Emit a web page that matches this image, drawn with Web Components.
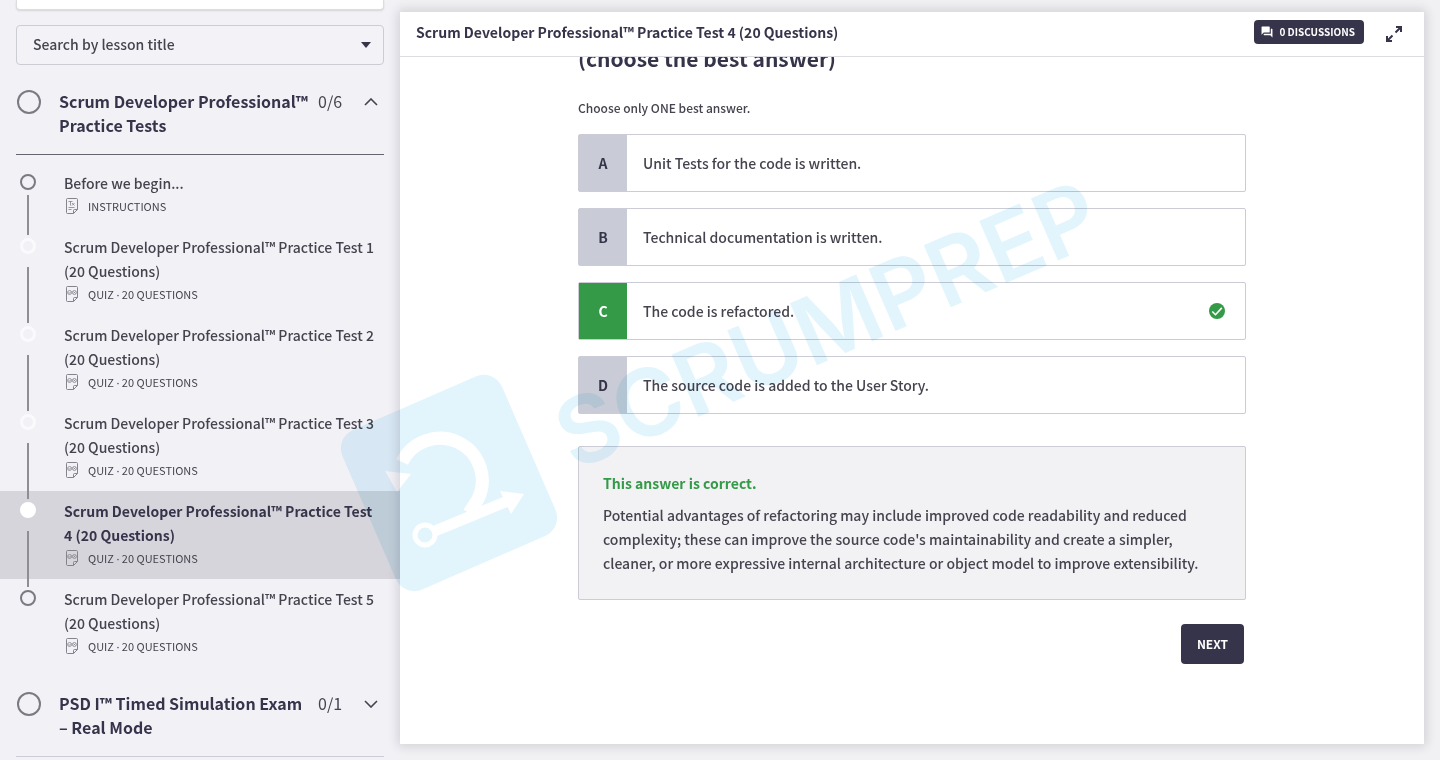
<!DOCTYPE html>
<html lang="en">
<head>
<meta charset="utf-8">
<meta name="viewport" content="width=device-width, initial-scale=1">
<title>Scrum Developer Professional™ Practice Test 4</title>
<style>
	:root {
		--ink: #36344a;
		--text: #45434e;
		--line: #cbccd5;
		--page: #f1f1f3;
		--side: #f2f1f6;
		--green: #349a47;
		--size-xs: 10px;
		--size-s: 11px;
		--size-m: 12px;
		--size-l: 14px;
		--size-xl: 16px;
	}

	body {
		margin: 0;
		background: var(--page);
		color: var(--text);
		font-family: 'Noto Sans CJK SC', 'Noto Sans', sans-serif;
		font-size: var(--size-l);
		font-weight: 500;
		line-height: 24px;
	}
</style>
</head>
<body>

<course-player>
	<course-sidebar slot="sidebar">
		<course-section count="0/6" open>
			<span slot="title">Scrum Developer Professional™ Practice Tests</span>
			<lesson-item kind="text" meta="INSTRUCTIONS">Before we begin...</lesson-item>
			<lesson-item kind="quiz" state="done" meta="QUIZ · 20 QUESTIONS">Scrum Developer Professional™ Practice Test 1 (20 Questions)</lesson-item>
			<lesson-item kind="quiz" state="done" meta="QUIZ · 20 QUESTIONS">Scrum Developer Professional™ Practice Test 2 (20 Questions)</lesson-item>
			<lesson-item kind="quiz" state="done" meta="QUIZ · 20 QUESTIONS">Scrum Developer Professional™ Practice Test 3 (20 Questions)</lesson-item>
			<lesson-item kind="quiz" state="current" meta="QUIZ · 20 QUESTIONS">Scrum Developer Professional™ Practice Test 4 (20 Questions)</lesson-item>
			<lesson-item kind="quiz" last meta="QUIZ · 20 QUESTIONS">Scrum Developer Professional™ Practice Test 5 (20 Questions)</lesson-item>
		</course-section>
		<course-section count="0/1">
			<span slot="title">PSD I™ Timed Simulation Exam – Real Mode</span>
		</course-section>
	</course-sidebar>

	<lesson-panel>
		<span slot="title">Scrum Developer Professional™ Practice Test 4 (20 Questions)</span>
		<quiz-question>
			<span slot="question">(choose the best answer)</span>
			<span slot="hint">Choose only ONE best answer.</span>
			<answer-option letter="A">Unit Tests for the code is written.</answer-option>
			<answer-option letter="B">Technical documentation is written.</answer-option>
			<answer-option letter="C" correct>The code is refactored.</answer-option>
			<answer-option letter="D">The source code is added to the User Story.</answer-option>
			<answer-feedback slot="feedback">
				<span slot="verdict">This answer is correct.</span>
				Potential advantages of refactoring may include improved code readability and reduced complexity; these can improve the source code's maintainability and create a simpler, cleaner, or more expressive internal architecture or object model to improve extensibility.
			</answer-feedback>
		</quiz-question>
	</lesson-panel>

	<brand-watermark slot="watermark"></brand-watermark>
</course-player>

<script>
(() => {
	// ======
	// Icons.
	// ======

	const chevron = `
		<svg class="chevron" width="14" height="8" viewBox="0 0 14 8" fill="none" stroke="currentColor" stroke-width="1.6" aria-hidden="true">
			<path d="M1 7l6-6 6 6"/>
		</svg>
	`;

	const iconText = `
		<svg width="14" height="16" viewBox="0 0 14 16" fill="none" stroke="#85838c" aria-hidden="true">
			<path d="M8.500 15.500H2.500a1 1 0 0 1-1-1v-13a1 1 0 0 1 1-1h9a1 1 0 0 1 1 1v10zM8.500 15.500v-3a1 1 0 0 1 1-1h3"/>
			<path d="M3.500 3.500h4M5.500 3.500v4M7 5l2.500 2.500M9.500 5L7 7.500M3.500 9.500h6M3.500 11.500h3" stroke-width=".8"/>
		</svg>
	`;

	const iconQuiz = `
		<svg width="14" height="16" viewBox="0 0 14 16" fill="none" stroke="#85838c" aria-hidden="true">
			<path d="M8.500 15.500H2.500a1 1 0 0 1-1-1v-13a1 1 0 0 1 1-1h9a1 1 0 0 1 1 1v10zM8.500 15.500v-3a1 1 0 0 1 1-1h3"/>
			<g stroke-width=".8">
				<circle cx="4.600" cy="6.500" r="2"/>
				<circle cx="9.400" cy="6.500" r="2"/>
				<path d="M3.500 6.500l1 .8 1.200-1.500M8.500 5.600l1.800 1.800M10.300 5.600L8.500 7.400"/>
			</g>
		</svg>
	`;

	// =====================
	// Helper: base element.
	// =====================

	class BaseElement extends HTMLElement {
		constructor() {
			super();

			const template = document.createElement('template');
			template.innerHTML = `
				<style>*, *::before { box-sizing: border-box; }</style>
				${this.render()}
			`;

			this.attachShadow({ mode: 'open' });
			this.shadowRoot.appendChild(template.content.cloneNode(true));
		}
	}

	// ============
	// Page layout.
	// ============

	class CoursePlayer extends BaseElement {
		render() {
			return `
				<style>
					:host {
						display: grid;
						grid-template-columns: 400px minmax(0, 1fr);
						height: 100vh;
						overflow: hidden;
						position: relative;
					}

					main {
						min-height: 0;
						padding: 12px 16px 16px 0;
					}
				</style>
				<slot name="sidebar"></slot>
				<main><slot></slot></main>
				<slot name="watermark"></slot>
			`;
		}
	}

	// ========
	// Sidebar.
	// ========

	class CourseSidebar extends BaseElement {
		render() {
			return `
				<style>
					:host {
						display: block;
						overflow: hidden;
						background: var(--side);
					}

					.card {
						height: 10px;
						margin: 0 16px 15px;
						background: #fff;
						border: 1px solid #dddde1;
						border-top: 0;
						border-radius: 0 0 4px 4px;
						box-shadow: 0 1px 2px rgba(0, 0, 0, 0.12);
					}

					.search {
						display: grid;
						align-items: center;
						margin: 0 16px;
					}

					.search > * {
						grid-area: 1 / 1;
					}

					select {
						appearance: none;
						width: 100%;
						height: 40px;
						padding: 0 16px 2px;
						border: 1px solid var(--line);
						border-radius: 4px;
						background: #f3f3f7;
						color: var(--text);
						font: inherit;
					}

					.search svg {
						justify-self: end;
						margin-right: 12px;
						pointer-events: none;
					}
				</style>
				<div class="card"></div>
				<div class="search">
					<select aria-label="Search by lesson title">
						<option>Search by lesson title</option>
					</select>
					<svg width="12" height="6" viewBox="0 0 12 6" fill="#36344a" aria-hidden="true"><path d="M1 0h10L6 6z"/></svg>
				</div>
				<nav><slot></slot></nav>
			`;
		}
	}

	class CourseSection extends BaseElement {
		render() {
			const count = this.getAttribute('count');

			return `
				<style>
					:host {
						display: block;
					}

					button {
						display: grid;
						grid-template-columns: 42px 1fr 46px 14px;
						width: calc(100% - 32px);
						margin: 0 16px;
						padding: 24px 6px 17px 1px;
						border: 0;
						border-bottom: 1px solid var(--line);
						background: none;
						color: inherit;
						font: inherit;
						text-align: left;
						cursor: pointer;
					}

					:host([open]) button {
						border-color: #66646f;
					}

					.ring {
						width: 24px;
						height: 24px;
						margin-top: 1px;
						border: 2px solid #7b7982;
						border-radius: 50%;
					}

					.title {
						padding-right: 8px;
						color: var(--ink);
						font-size: var(--size-xl);
						font-weight: 700;
					}

					.count {
						font-size: var(--size-xl);
						font-weight: 400;
					}

					.chevron {
						margin-top: 9px;
						transform: rotate(180deg);
					}

					:host([open]) .chevron {
						transform: none;
					}

					.lessons {
						display: none;
						padding-top: 8px;
					}

					:host([open]) .lessons {
						display: block;
					}
				</style>
				<button type="button">
					<span class="ring"></span>
					<span class="title"><slot name="title"></slot></span>
					<span class="count">${count}</span>
					${chevron}
				</button>
				<div class="lessons"><slot></slot></div>
			`;
		}

		connectedCallback() {
			this.shadowRoot.querySelector('button').addEventListener('click', () => {
				this.toggleAttribute('open');
			});
		}
	}

	class LessonItem extends BaseElement {
		render() {
			const icon = this.getAttribute('kind') === 'quiz' ? iconQuiz : iconText;

			// The CJK face has a wide middle dot.
			const meta = this.getAttribute('meta').replace('·', '<span class="dot">·</span>');

			return `
				<style>
					:host {
						display: block;
					}

					:host([state='current']) {
						background: #d6d5db;
					}

					a {
						display: grid;
						grid-template-columns: 16px 1fr;
						column-gap: 28px;
						padding: 8px 24px 8px 20px;
						color: inherit;
						text-decoration: none;
					}

					.rail {
						display: flex;
						flex-direction: column;
						align-items: center;
						gap: 5px;
						margin: 3px 0 -16px;
					}

					.ring {
						flex: none;
						width: 16px;
						height: 16px;
						border: 2px solid #7b7982;
						border-radius: 50%;
					}

					.rail::after {
						content: '';
						flex: 1;
						width: 2px;
						background: #8f8e95;
					}

					:host([state]) .rail {
						gap: 13px;
					}

					:host([state]) .ring {
						border: 3px solid #fafafc;
					}

					:host([state='current']) .ring {
						background: #fff;
						border-color: #fff;
					}

					:host([last]) .rail::after {
						display: none;
					}

					.title {
						display: block;
					}

					:host([state='current']) .title {
						color: var(--ink);
						font-weight: 700;
					}

					.meta {
						display: flex;
						align-items: center;
						gap: 9px;
						padding: 0 0 2px 1px;
						font-size: var(--size-s);
						font-weight: 400;
						line-height: 22px;
					}

					.dot {
						font-family: 'Noto Sans', sans-serif;
						line-height: 1;
					}
				</style>
				<a href="#">
					<span class="rail"><span class="ring"></span></span>
					<span>
						<span class="title"><slot></slot></span>
						<span class="meta">${icon}<span>${meta}</span></span>
					</span>
				</a>
			`;
		}
	}

	// =============
	// Lesson panel.
	// =============

	class LessonPanel extends BaseElement {
		render() {
			return `
				<style>
					:host {
						display: flex;
						flex-direction: column;
						height: 100%;
						background: #fff;
						box-shadow: 0 0 10px 2px rgba(40, 38, 60, 0.16);
					}

					header {
						display: flex;
						align-items: center;
						gap: 20px;
						flex: none;
						height: 45px;
						padding: 0 20px 4px 16px;
						border-bottom: 1px solid #dcdce2;
					}

					h1 {
						flex: 1;
						margin: 0;
						color: var(--ink);
						font-size: var(--size-l);
						font-weight: 700;
					}

					button {
						display: flex;
						align-items: center;
						padding: 0;
						border: 0;
						background: none;
						color: var(--ink);
						font: inherit;
						cursor: pointer;
					}

					.discussions {
						gap: 6px;
						height: 24px;
						padding: 0 9px 0 7px;
						border-radius: 4px;
						background: var(--ink);
						color: #fff;
						font-size: var(--size-xs);
						font-weight: 700;
					}

					.body {
						flex: 1;
						min-height: 0;
						overflow: hidden;
					}
				</style>
				<header>
					<h1><slot name="title"></slot></h1>
					<button class="discussions" type="button">
						<svg width="12" height="12" viewBox="1 1 22 22" fill="currentColor" aria-hidden="true">
							<path d="M21 6h-2v9H6v2c0 .55.45 1 1 1h11l4 4V7c0-.55-.45-1-1-1zm-4 6V3c0-.55-.45-1-1-1H3c-.55 0-1 .45-1 1v14l4-4h10c.55 0 1-.45 1-1z"/>
						</svg>
						<span>0 DISCUSSIONS</span>
					</button>
					<button type="button" aria-label="Full screen">
						<svg width="20" height="24" viewBox="0 0 20 24" fill="none" stroke="currentColor" stroke-width="2" aria-hidden="true">
							<path d="M12 7h5v5M17 7l-5.500 5.500M8 21H3v-5M3 21l5.500-5.500"/>
						</svg>
					</button>
				</header>
				<div class="body"><slot></slot></div>
			`;
		}
	}

	// =====
	// Quiz.
	// =====

	class QuizQuestion extends BaseElement {
		render() {
			return `
				<style>
					:host {
						display: block;
						max-width: 668px;
						margin: 0 auto;
					}

					/* The question is scrolled partly under the header. */
					h2 {
						margin: -14px 0 23px;
						color: var(--ink);
						font-size: 21px;
						font-weight: 700;
						line-height: 30px;
					}

					p {
						margin: 0 0 14px;
						font-size: var(--size-m);
					}

					.answers {
						display: grid;
						gap: 16px;
						margin-bottom: 32px;
					}

					.actions {
						display: flex;
						justify-content: flex-end;
						padding: 24px 2px 0 0;
					}

					button {
						height: 40px;
						padding: 0 16px;
						border: 0;
						border-radius: 4px;
						background: var(--ink);
						color: #fff;
						font: inherit;
						font-size: var(--size-m);
						font-weight: 700;
						cursor: pointer;
					}
				</style>
				<h2><slot name="question"></slot></h2>
				<p><slot name="hint"></slot></p>
				<div class="answers" role="radiogroup"><slot></slot></div>
				<slot name="feedback"></slot>
				<div class="actions"><button type="button">NEXT</button></div>
			`;
		}
	}

	class AnswerOption extends BaseElement {
		render() {
			const letter = this.getAttribute('letter');
			const correct = this.hasAttribute('correct');

			return `
				<style>
					:host {
						display: block;
					}

					label {
						display: grid;
						grid-template-columns: 48px 1fr auto;
						align-items: center;
						min-height: 58px;
						border: 1px solid var(--line);
						border-radius: 2px;
						cursor: pointer;
					}

					input {
						grid-area: 1 / 1;
						opacity: 0;
						margin: 0;
					}

					.letter {
						display: grid;
						grid-area: 1 / 1;
						place-items: center;
						align-self: stretch;
						background: #c9ccd6;
						color: var(--ink);
						font-weight: 700;
					}

					:host([correct]) .letter {
						background: var(--green);
						color: #fff;
					}

					.label {
						padding: 0 16px;
					}

					svg {
						margin-right: 20px;
					}
				</style>
				<label>
					<input type="radio" name="answer" value="${letter}" ${correct ? 'checked' : ''}>
					<span class="letter">${letter}</span>
					<span class="label"><slot></slot></span>
					${correct ? `
						<svg width="16" height="16" viewBox="0 0 16 16" aria-hidden="true">
							<circle cx="8" cy="8" r="8" fill="#349a47"/>
							<path d="M3.300 8.500l3.200 3.200 6.300-6.800" fill="none" stroke="#fff" stroke-width="1.600"/>
						</svg>
					` : ''}
				</label>
			`;
		}
	}

	class AnswerFeedback extends BaseElement {
		render() {
			return `
				<style>
					:host {
						display: block;
						padding: 24px;
						border: 1px solid var(--line);
						border-radius: 2px;
						background: #f2f2f5;
					}

					strong {
						display: block;
						margin-bottom: 8px;
						color: var(--green);
					}
				</style>
				<strong><slot name="verdict"></slot></strong>
				<slot></slot>
			`;
		}
	}

	// ==========
	// Watermark.
	// ==========

	class BrandWatermark extends BaseElement {
		render() {
			return `
				<style>
					:host {
						position: absolute;
						top: 0;
						left: 0;
						mix-blend-mode: multiply;
						pointer-events: none;
					}

					svg {
						display: block;
						overflow: visible;
					}

					text {
						font-family: Inter, sans-serif;
						font-size: 93px;
						font-weight: 600;
					}
				</style>
				<svg width="1240" height="740" viewBox="0 0 1240 740" fill="#e3f5fc" role="img" aria-label="ScrumPrep">
					<rect x="362" y="396" width="174" height="174" rx="20" transform="rotate(-23.500 449 483)"/>
					<g fill="none" stroke="#fff">
						<path d="M402 462A42 42 0 1 1 478 499Q475 504 469 513" stroke-width="13"/>
						<path d="M435 531l75-31" stroke-width="11"/>
						<circle cx="425" cy="535" r="10" stroke-width="5"/>
					</g>
					<path d="M385 471l26 3-14 18zM500 491l24 3-13 20z" fill="#fff"/>
					<text transform="translate(574 471) rotate(-23.500)">SCRUMPREP</text>
				</svg>
			`;
		}
	}

	// ================
	// Define elements.
	// ================

	customElements.define('course-player', CoursePlayer);
	customElements.define('course-sidebar', CourseSidebar);
	customElements.define('course-section', CourseSection);
	customElements.define('lesson-item', LessonItem);
	customElements.define('lesson-panel', LessonPanel);
	customElements.define('quiz-question', QuizQuestion);
	customElements.define('answer-option', AnswerOption);
	customElements.define('answer-feedback', AnswerFeedback);
	customElements.define('brand-watermark', BrandWatermark);
})();
</script>
</body>
</html>
